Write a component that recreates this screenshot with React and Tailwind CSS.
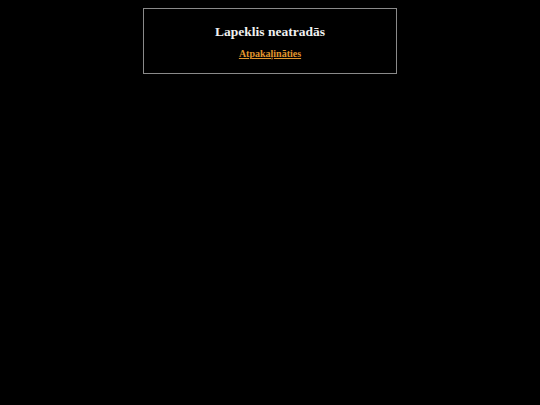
export default function App() {
  return (
    <div className="min-h-screen bg-black pt-2" style={{ fontFamily: '"Liberation Serif", "Times New Roman", serif' }}>
      <div className="mx-auto w-[254px] h-[66px] border border-[#8a8a8a] flex flex-col items-center pt-[14px]">
        <h1 className="text-[13.5px] leading-[17px] font-bold text-[#f0f0f0]">Lapeklis neatradās</h1>
        <a href="#" className="mt-[7px] text-[10px] leading-[13px] font-bold text-[#e0962e] underline">
          Atpakaļināties
        </a>
      </div>
    </div>
  );
}
